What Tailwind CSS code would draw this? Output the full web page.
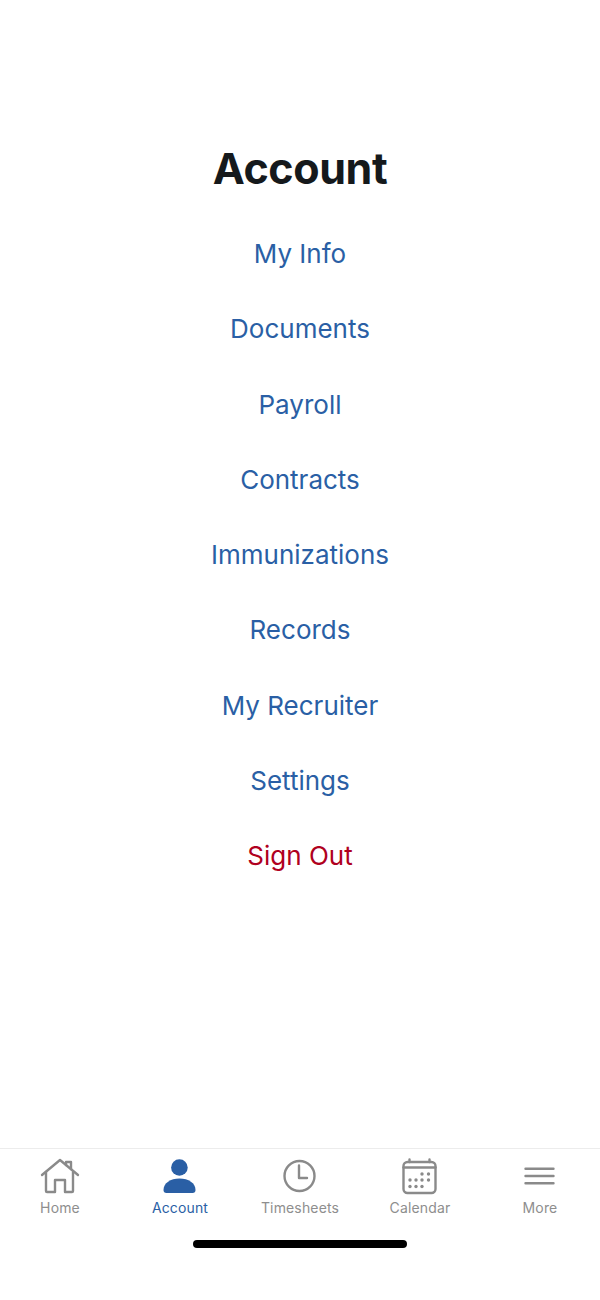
<!DOCTYPE html>
<html>
<head>
<meta charset="utf-8">
<script src="https://cdn.jsdelivr.net/npm/@tailwindcss/browser@4"></script>
</head>
<body class="bg-white font-['Inter',sans-serif]">
<div class="w-[600px] h-[1300px] flex flex-col bg-white overflow-hidden">
  <main class="flex-1 flex flex-col items-center pt-[143px]">
    <h1 class="text-[43px] leading-[50px] font-bold text-[#15191c] tracking-[-0.4px]">Account</h1>
    <nav class="mt-[23px] flex flex-col items-center text-[26px] leading-[75.3px] text-[#2a5fa5]">
      <a>My Info</a>
      <a>Documents</a>
      <a>Payroll</a>
      <a>Contracts</a>
      <a>Immunizations</a>
      <a>Records</a>
      <a>My Recruiter</a>
      <a>Settings</a>
      <a class="text-[#b00020]">Sign Out</a>
    </nav>
  </main>
  <footer class="h-[152px] border-t border-[#ececec] relative">
    <div class="grid grid-cols-5 pt-[9px] text-[14px] leading-[18px] tracking-[0.15px] text-[#8e8e8e]">
      <div class="flex flex-col items-center gap-[3px]">
        <svg class="w-[40px] h-[38px]" viewBox="0 0 40 38" fill="none" stroke="#8a8a8a" stroke-width="2.4" stroke-linecap="round" stroke-linejoin="round">
          <path d="M2 17 L20 2 L38 17"/><path d="M6 14 V33 Q6 34 7 34 H15 V22 H25 V34 H32 Q33 34 33 33 V14"/><path d="M26 7 V4 H31 V11"/>
        </svg>
        <span>Home</span>
      </div>
      <div class="flex flex-col items-center gap-[3px] text-[#2a5fa5]">
        <svg class="w-[40px] h-[38px]" viewBox="0 0 40 38" fill="#2a5fa5">
          <circle cx="19.4" cy="9.5" r="8.3"/><path d="M3.5 32 C3.5 25 10.5 20.5 19.5 20.5 C28.5 20.5 35.5 25 35.5 32 Q35.5 35 32.5 35 H6.5 Q3.5 35 3.5 32 Z"/>
        </svg>
        <span>Account</span>
      </div>
      <div class="flex flex-col items-center gap-[3px]">
        <svg class="w-[40px] h-[38px]" viewBox="0 0 40 38" fill="none" stroke="#8a8a8a" stroke-width="2.4" stroke-linecap="round" stroke-linejoin="round">
          <circle cx="19.5" cy="18" r="15"/><path d="M19 7.5 V20 H27"/>
        </svg>
        <span>Timesheets</span>
      </div>
      <div class="flex flex-col items-center gap-[3px]">
        <svg class="w-[40px] h-[38px]" viewBox="0 0 40 38" fill="none" stroke="#8a8a8a" stroke-width="2.4" stroke-linecap="round">
          <rect x="3.5" y="4" width="32" height="31" rx="4"/><path d="M3.5 9.5 H35.5"/><path d="M9.5 1.5 V4 M29.5 1.5 V4"/>
          <g fill="#8a8a8a" stroke="none">
            <circle cx="22" cy="16" r="1.7"/><circle cx="28.5" cy="16" r="1.7"/>
            <circle cx="10" cy="22" r="1.7"/><circle cx="16" cy="22" r="1.7"/><circle cx="22" cy="22" r="1.7"/><circle cx="28.5" cy="22" r="1.7"/>
            <circle cx="10" cy="28.5" r="1.7"/><circle cx="16" cy="28.5" r="1.7"/><circle cx="22" cy="28.5" r="1.7"/>
          </g>
        </svg>
        <span>Calendar</span>
      </div>
      <div class="flex flex-col items-center gap-[3px]">
        <svg class="w-[40px] h-[38px]" viewBox="0 0 40 38" fill="none" stroke="#8a8a8a" stroke-width="2.4" stroke-linecap="round">
          <path d="M5.5 10.7 H33.5 M5.5 18 H33.5 M5.5 25.3 H33.5"/>
        </svg>
        <span>More</span>
      </div>
    </div>
    <div class="absolute left-[193px] top-[91px] w-[214px] h-[8px] rounded-full bg-black"></div>
  </footer>
</div>
</body>
</html>
